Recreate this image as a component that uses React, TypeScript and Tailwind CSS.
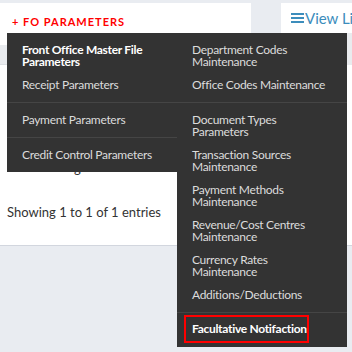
import React from "react";

const Item: React.FC<{ children: React.ReactNode; bold?: boolean }> = ({ children, bold }) => (
  <a
    href="#"
    className={
      "block px-[15px] text-[12px] leading-[12px] tracking-[-0.3px] whitespace-nowrap " +
      (bold ? "font-bold text-white" : "text-[#dcdcdc]")
    }
  >
    {children}
  </a>
);

const Divider: React.FC = () => <div className="h-px bg-[#454545]" />;

const App: React.FC = () => {
  return (
    <div className="relative w-[352px] h-[352px] overflow-hidden bg-[#e9ecf1] pt-[3px] font-['Lato',sans-serif]">
      <div className="flex h-[243px] gap-[30px]">
        {/* left box */}
        <div className="w-[251px] shrink-0 bg-white border-b border-[#d2d6de] flex flex-col">
          <div className="h-[38px] flex items-center pl-[12px] pt-[1px] text-[11px] font-bold tracking-[1px] text-[#ff0000]">
            + FO PARAMETERS
          </div>
          <div className="mt-[4px] h-[20px] bg-[#e9ebee] border-b border-[#dcdfe3]" />
          <div className="pt-[95px] pl-[74px] text-[13px] leading-[16px] text-[#333]">g</div>
          <div className="mt-[28px] pl-[7px] text-[13px] leading-[16px] text-[#333]">
            Showing 1 to 1 of 1 entries
          </div>
        </div>
        {/* right box */}
        <div className="flex-1 bg-white border-b border-[#d2d6de] flex flex-col">
          <div className="h-[30px] flex items-center pl-[10px] text-[15px] text-[#3c8dbc] whitespace-nowrap">
            <svg width="13" height="12" viewBox="0 0 13 12" className="mr-[1px]">
              <rect x="0" y="1" width="13" height="2" fill="#3c8dbc" />
              <rect x="0" y="5" width="13" height="2" fill="#3c8dbc" />
              <rect x="0" y="9" width="13" height="2" fill="#3c8dbc" />
            </svg>
            View Links
          </div>
          <div className="h-[32px] bg-[#e9ebee]" />
          <div className="h-[48px]" />
          <div className="h-[36px] flex justify-end">
            <div className="w-[5px] bg-[#9a9a9a]" />
          </div>
        </div>
      </div>

      {/* dropdown mega menu */}
      <div className="absolute left-[7px] top-[33px] flex w-[340px] items-start">
        <div className="w-[170px] bg-[#333] flex flex-col gap-[11px] py-[11px]">
          <Item bold>
            Front Office Master File
            <br />
            Parameters
          </Item>
          <Item>Receipt Parameters</Item>
          <Divider />
          <Item>Payment Parameters</Item>
          <Divider />
          <Item>Credit Control Parameters</Item>
        </div>
        <div className="w-[170px] bg-[#333] flex flex-col pt-[11px] pb-[4px]">
          <div className="flex flex-col gap-[11px]">
            <Item>
              Department Codes
              <br />
              Maintenance
            </Item>
            <Item>Office Codes Maintenance</Item>
            <div className="h-px bg-[#454545] -ml-[170px]" />
            <Item>
              Document Types
              <br />
              Parameters
            </Item>
            <Item>
              Transaction Sources
              <br />
              Maintenance
            </Item>
            <Item>
              Payment Methods
              <br />
              Maintenance
            </Item>
            <Item>
              Revenue/Cost Centres
              <br />
              Maintenance
            </Item>
            <Item>
              Currency Rates
              <br />
              Maintenance
            </Item>
            <Item>Additions/Deductions</Item>
            <Divider />
          </div>
          <div className="mt-[2px] ml-[7px] w-[125px] h-[28px] border-2 border-[#ff0000] flex items-center pl-[6px] text-[12px] tracking-[-0.3px] font-bold text-white whitespace-nowrap">
            Facultative Notifaction
          </div>
        </div>
      </div>
    </div>
  );
};

export default App;
